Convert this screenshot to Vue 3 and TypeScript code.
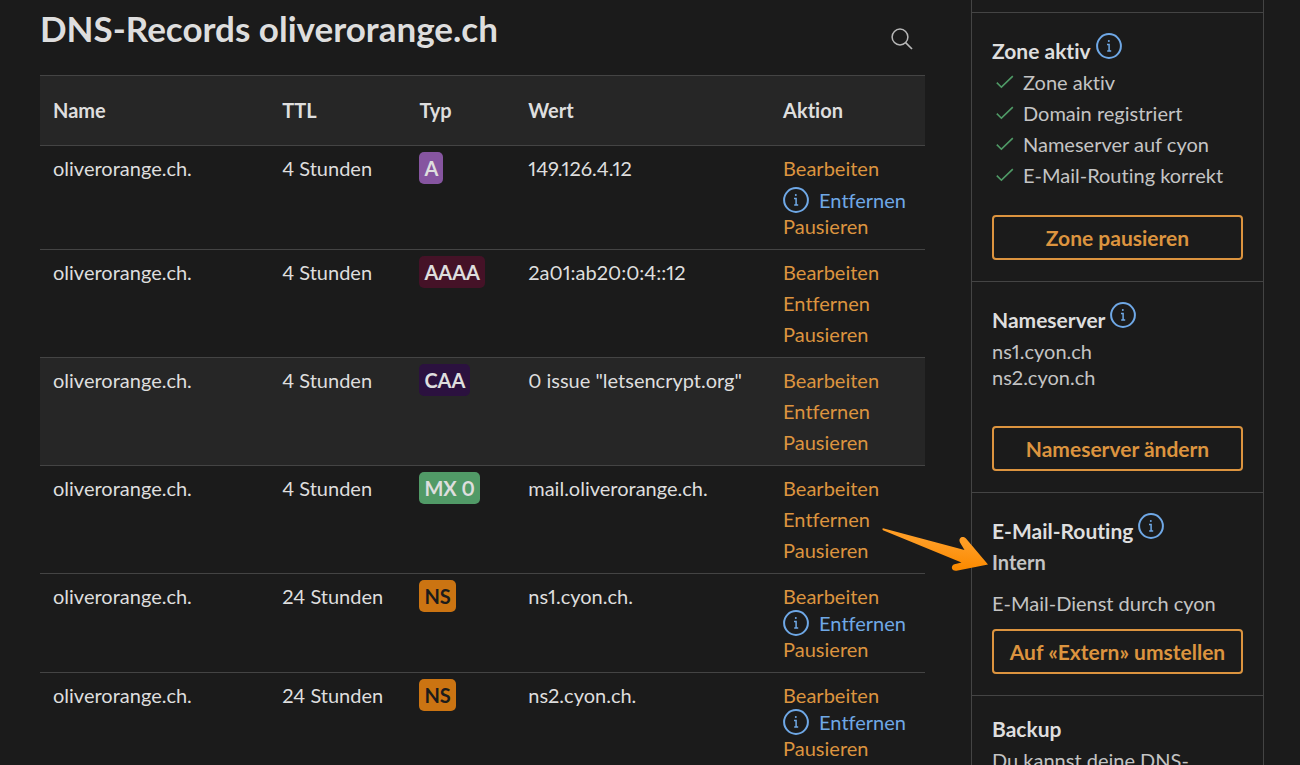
<script setup lang="ts">
interface DnsRecord {
  name: string
  ttl: string
  type: string
  kind: string
  value: string
  locked: boolean
  shaded: boolean
  spaced: boolean
}

const columns: string[] = ['Name', 'TTL', 'Typ', 'Wert', 'Aktion']

const records: DnsRecord[] = [
  { name: 'oliverorange.ch.', ttl: '4 Stunden', type: 'A', kind: 'a', value: '149.126.4.12', locked: true, shaded: false, spaced: true },
  { name: 'oliverorange.ch.', ttl: '4 Stunden', type: 'AAAA', kind: 'aaaa', value: '2a01:ab20:0:4::12', locked: false, shaded: false, spaced: true },
  { name: 'oliverorange.ch.', ttl: '4 Stunden', type: 'CAA', kind: 'caa', value: '0 issue "letsencrypt.org"', locked: false, shaded: true, spaced: true },
  { name: 'oliverorange.ch.', ttl: '4 Stunden', type: 'MX 0', kind: 'mx', value: 'mail.oliverorange.ch.', locked: false, shaded: false, spaced: true },
  { name: 'oliverorange.ch.', ttl: '24 Stunden', type: 'NS', kind: 'ns', value: 'ns1.cyon.ch.', locked: true, shaded: false, spaced: false },
  { name: 'oliverorange.ch.', ttl: '24 Stunden', type: 'NS', kind: 'ns', value: 'ns2.cyon.ch.', locked: true, shaded: false, spaced: false },
]

const checks: string[] = ['Zone aktiv', 'Domain registriert', 'Nameserver auf cyon', 'E-Mail-Routing korrekt']
</script>

<template>
  <svg class="defs" aria-hidden="true">
    <symbol id="icon-info" viewBox="0 0 26 26">
      <circle cx="13" cy="13" r="11.9" fill="none" stroke="currentColor" stroke-width="2" />
      <circle cx="12.8" cy="8" r="1" fill="currentColor" />
      <path d="M11 11.4h2.1v6.4M11.2 17.9h4" fill="none" stroke="currentColor" stroke-width="1.5" />
    </symbol>
  </svg>
  <div class="page">
    <main class="records">
      <header class="head">
        <h1>DNS-Records oliverorange.ch</h1>
        <button class="search" type="button" aria-label="Suchen">
          <svg viewBox="0 0 22 22" width="22" height="22">
            <circle cx="9" cy="9" r="7.9" fill="none" stroke="currentColor" stroke-width="1.5" />
            <path d="M14.6 14.6L21 21" fill="none" stroke="currentColor" stroke-width="1.7" />
          </svg>
        </button>
      </header>
      <table>
        <thead>
          <tr>
            <th v-for="c in columns" :key="c" scope="col">{{ c }}</th>
          </tr>
        </thead>
        <tbody>
          <tr v-for="(r, i) in records" :key="i" :class="{ shaded: r.shaded }">
            <td>{{ r.name }}</td>
            <td>{{ r.ttl }}</td>
            <td><span class="badge" :class="r.kind">{{ r.type }}</span></td>
            <td>{{ r.value }}</td>
            <td>
              <div class="actions">
                <a href="#" :class="{ spaced: r.spaced }">Bearbeiten</a>
                <a v-if="r.locked" href="#" class="locked">
                  <svg class="info"><use href="#icon-info" /></svg>Entfernen
                </a>
                <a v-else href="#" class="spaced">Entfernen</a>
                <a href="#">Pausieren</a>
              </div>
            </td>
          </tr>
        </tbody>
      </table>
    </main>

    <aside class="side">
      <section>
        <h2 class="tall">Zone aktiv <svg class="info"><use href="#icon-info" /></svg></h2>
        <ul>
          <li v-for="c in checks" :key="c">
            <svg class="check" viewBox="0 0 18 14">
              <path d="M0.8 7.6L5.4 12.2L16.8 1.2" fill="none" stroke="currentColor" stroke-width="1.6" />
            </svg>{{ c }}
          </li>
        </ul>
        <button class="btn" type="button">Zone pausieren</button>
      </section>
      <section>
        <h2 class="tall">Nameserver <svg class="info"><use href="#icon-info" /></svg></h2>
        <p class="hosts">ns1.cyon.ch<br>ns2.cyon.ch</p>
        <button class="btn" type="button">Nameserver ändern</button>
      </section>
      <section class="routing">
        <h2 class="tall">E-Mail-Routing <svg class="info"><use href="#icon-info" /></svg></h2>
        <p class="mode"><strong>Intern</strong></p>
        <p class="service">E-Mail-Dienst durch cyon</p>
        <button class="btn" type="button">Auf «Extern» umstellen</button>
        <svg class="arrow" viewBox="0 0 110 48" aria-hidden="true">
          <defs>
            <linearGradient id="arrow-fill" x1="0.55" y1="0.3" x2="0.45" y2="0.9">
              <stop offset="0" stop-color="#ff9d24" />
              <stop offset="1" stop-color="#fb8a00" />
            </linearGradient>
          </defs>
          <path d="M3 2.2L84.5 24L80 16.5C78 12.5 82 9 86 12.6L108 38.4L76.5 44.8C71 45.3 70.5 39.5 74.5 38.3L81.5 36.6L3 4.2Q1.5 2.5 3 2.2Z" fill="url(#arrow-fill)" />
        </svg>
      </section>
      <section>
        <h2>Backup</h2>
        <p>Du kannst deine DNS-</p>
      </section>
    </aside>
  </div>
</template>

<style>
body {
  margin: 0;
  background: #1b1b1b;
}
</style>

<style scoped>
.defs {
  position: absolute;
  width: 0;
  height: 0;
}
.page {
  box-sizing: border-box;
  display: grid;
  grid-template-columns: minmax(0, 1fr) 293px;
  column-gap: 46px;
  height: 100vh;
  padding: 0 36px 0 40px;
  overflow: hidden;
  background: #1b1b1b;
  color: #dedede;
  font: 20px/26px Lato, "Open Sans", sans-serif;
  font-variant-numeric: proportional-nums;
  font-variant-ligatures: none;
}
h1, h2, p, ul {
  margin: 0;
  padding: 0;
}
.head {
  display: flex;
  justify-content: space-between;
  height: 75px;
}
h1 {
  padding-top: 8px;
  font-size: 35px;
  line-height: 40px;
}
.search {
  align-self: flex-start;
  margin: 28px 12px 0 0;
  padding: 0;
  border: 0;
  background: none;
  color: #b8b8b8;
}
.search svg {
  display: block;
}
table {
  width: 100%;
  table-layout: fixed;
  border-collapse: separate;
  border-spacing: 0;
}
th, td {
  box-sizing: border-box;
  padding: 9px 0 10px 13px;
  border-top: 1px solid #444;
  text-align: left;
  vertical-align: top;
  white-space: nowrap;
}
th {
  height: 70px;
  background: #262626;
  vertical-align: middle;
}
th:nth-child(1) { width: 25.9%; }
th:nth-child(2) { width: 15.5%; }
th:nth-child(3) { width: 12.3%; }
th:nth-child(4) { width: 28.8%; }
.shaded td {
  background: #262626;
}
.badge {
  padding: 4px 5px;
  border-radius: 5px;
  font-weight: 700;
}
.a { background: #8655a0; }
.aaaa { background: #451227; }
.caa { background: #2b113f; }
.mx { background: #519a67; }
.ns { background: #cb7412; color: #1b1b1b; }
.actions {
  display: flex;
  flex-direction: column;
  align-items: flex-start;
}
a {
  color: #dc943f;
  text-decoration: none;
}
.spaced {
  margin-bottom: 5px;
}
.locked {
  display: flex;
  align-items: center;
  gap: 10px;
  height: 27px;
  color: #6fa8e6;
}
.info {
  flex: none;
  width: 26px;
  height: 26px;
  color: #6fa8e6;
}
.side {
  padding-top: 12px;
  border: 1px solid #444;
  border-width: 0 1px;
}
section {
  padding: 20px 20px 21px;
  border-top: 1px solid #444;
}
h2 {
  margin-bottom: 5px;
  font-size: 21px;
  line-height: 26px;
}
.tall {
  display: flex;
  align-items: flex-end;
  gap: 5px;
  height: 31px;
}
.tall .info {
  align-self: flex-start;
}
p, li {
  color: #c4c4c4;
}
ul {
  display: grid;
  gap: 5px;
  list-style: none;
}
li {
  display: flex;
  align-items: center;
}
.check {
  width: 18px;
  height: 14px;
  margin: 0 9px 0 4px;
  color: #4f9a66;
}
.btn {
  box-sizing: border-box;
  display: block;
  width: 100%;
  height: 45px;
  padding: 0;
  border: 2px solid #dc943f;
  border-radius: 4px;
  background: none;
  color: #dc943f;
  font: inherit;
  font-size: 21px;
  font-weight: 700;
}
ul + .btn {
  margin-top: 27px;
}
.hosts + .btn {
  margin-top: 36px;
}
.service {
  margin: 15px 0 13px;
}
.routing {
  position: relative;
}
.arrow {
  position: absolute;
  top: 33px;
  left: -92px;
  width: 110px;
  height: 48px;
}
</style>
